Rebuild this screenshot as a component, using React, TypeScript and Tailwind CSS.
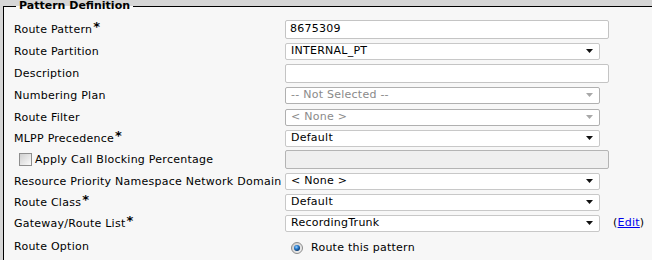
import type { ReactNode } from "react";

function Arrow({ disabled }: { disabled?: boolean }) {
  return (
    <svg width="7" height="4" viewBox="0 0 7 4" className="shrink-0">
      <polygon points="0,0 7,0 3.5,4" fill={disabled ? "#a8a8a8" : "#111"} />
    </svg>
  );
}

function TextInput({ value, disabled }: { value?: string; disabled?: boolean }) {
  return (
    <div
      className={`w-[324px] h-[19px] border rounded-[2px] px-[4px] flex items-center text-[11px] text-black ${
        disabled ? "bg-[#efefef] border-[#b4b4b4]" : "bg-white border-[#c4c4c4]"
      }`}
    >
      {value}
    </div>
  );
}

function Select({ value, disabled }: { value: string; disabled?: boolean }) {
  return (
    <div
      className={`w-[315px] h-[17px] border rounded-[2px] bg-white pl-[5px] pr-[6px] flex items-center justify-between text-[11px] ${
        disabled ? "border-[#b0b0b0] text-[#8a8a8a]" : "border-[#c8c8c8] text-black"
      }`}
    >
      <span>{value}</span>
      <Arrow disabled={disabled} />
    </div>
  );
}

function Row({
  label,
  req,
  h,
  children,
}: {
  label: ReactNode;
  req?: boolean;
  h: string;
  children?: ReactNode;
}) {
  return (
    <div className={`flex items-center ${h}`}>
      <div className="w-[271px] shrink-0 flex items-center text-[11px] leading-[13px] text-black">
        {label}
        {req && <span className="text-[13px] leading-none ml-[1px] self-start mt-[-3px] font-bold">*</span>}
      </div>
      <div className="flex items-center">{children}</div>
    </div>
  );
}

function Radio() {
  return (
    <svg width="12" height="12" viewBox="0 0 12 12" className="shrink-0">
      <defs>
        <radialGradient id="rdot" cx="0.4" cy="0.35" r="0.6">
          <stop offset="0" stopColor="#9fd3ff" />
          <stop offset="0.5" stopColor="#2a7fd0" />
          <stop offset="1" stopColor="#0d3f78" />
        </radialGradient>
        <linearGradient id="rring" x1="0" y1="0" x2="1" y2="1">
          <stop offset="0" stopColor="#c9c9c9" />
          <stop offset="1" stopColor="#f4f4f4" />
        </linearGradient>
      </defs>
      <circle cx="6" cy="6" r="5.5" fill="url(#rring)" stroke="#8c8c8c" strokeWidth="1" />
      <circle cx="6" cy="6" r="3" fill="url(#rdot)" />
    </svg>
  );
}

export default function App() {
  return (
    <div className="w-[652px] h-[260px] overflow-hidden bg-[#d6d6d6] pl-[3px] tracking-[0.25px] font-['DejaVu_Sans',Verdana,sans-serif]">
      <fieldset className="h-full w-full bg-[#f7f7f7] border-t border-l border-black pl-[10px] pt-[6px]">
        <legend className="ml-[2px] px-[3px] text-[11px] leading-[12px] font-bold tracking-normal text-black">
          Pattern Definition
        </legend>
        <Row label="Route Pattern" req h="h-[22px]">
          <TextInput value="8675309" />
        </Row>
        <Row label="Route Partition" h="h-[22px]">
          <Select value="INTERNAL_PT" />
        </Row>
        <Row label="Description" h="h-[22px]">
          <TextInput />
        </Row>
        <Row label="Numbering Plan" h="h-[22px]">
          <Select value="-- Not Selected --" disabled />
        </Row>
        <Row label="Route Filter" h="h-[22px]">
          <Select value="< None >" disabled />
        </Row>
        <Row label="MLPP Precedence" req h="h-[20px]">
          <Select value="Default" />
        </Row>
        <Row
          h="h-[22px]"
          label={
            <span className="flex items-center ml-[5px]">
              <span className="w-[13px] h-[13px] border border-[#8e8e8e] bg-gradient-to-br from-[#cfcfcf] to-[#fbfbfb] mr-[3px] shrink-0" />
              Apply Call Blocking Percentage
            </span>
          }
        >
          <TextInput disabled />
        </Row>
        <Row label="Resource Priority Namespace Network Domain" h="h-[22px]">
          <Select value="< None >" />
        </Row>
        <Row label="Route Class" req h="h-[20px]">
          <Select value="Default" />
        </Row>
        <Row label="Gateway/Route List" req h="h-[22px]">
          <Select value="RecordingTrunk" />
          <span className="ml-[13px] text-[11px] text-black">
            (<a href="#" className="text-[#0000ee] underline">Edit</a>)
          </span>
        </Row>
        <Row label="Route Option" h="h-[24px]">
          <div className="flex items-center ml-[6px] pt-[4px] text-[11px] text-black">
            <Radio />
            <span className="ml-[8px]">Route this pattern</span>
          </div>
        </Row>
      </fieldset>
    </div>
  );
}
